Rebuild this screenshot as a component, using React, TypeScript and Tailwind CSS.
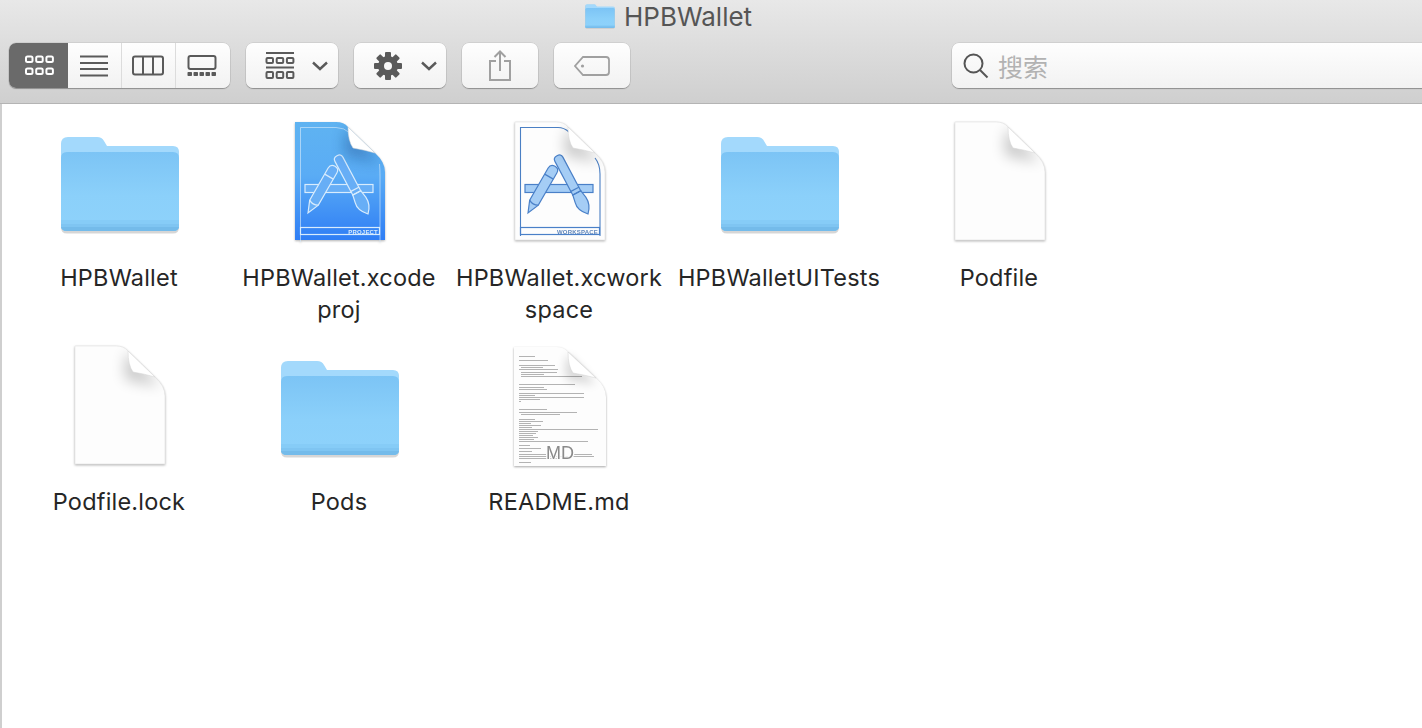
const ink = "#5a5a5a";

function FolderIcon({ className }: { className: string }) {
  return (
    <svg viewBox="0 0 120 124" className={className}>
      <defs>
        <linearGradient id="folderFront" x1="0" y1="0" x2="0" y2="1">
          <stop offset="0" stopColor="#7cc4f5" />
          <stop offset="0.55" stopColor="#8bd0fa" />
          <stop offset="1" stopColor="#8ed2fb" />
        </linearGradient>
      </defs>
      <path d="M1 111 V24 Q1 17 8 17 H37 Q42 17 44 21 L47 26 H113 Q119 26 119 32 V106 Q119 112 113 112 H7 Q1 112 1 106 Z" fill="#000" opacity="0.16" transform="translate(0 1.5)" />
      <path d="M1 40 V24 Q1 17 8 17 H37 Q42 17 44 21 L47 26 H113 Q119 26 119 32 V40 Z" fill="#a3d9fc" />
      <path d="M1 38 Q1 32 7 32 H113 Q119 32 119 38 V105 Q119 111 113 111 H7 Q1 111 1 105 Z" fill="url(#folderFront)" />
      <path d="M1 100 H119 V105 Q119 111 113 111 H7 Q1 111 1 105 Z" fill="#86ccf7" />
      <path d="M1 104 H119 V105 Q119 111 113 111 H7 Q1 111 1 105 Z" fill="#7fc5f2" />
      <path d="M1 107 H119 Q118 111 113 111 H7 Q2 111 1 107 Z" fill="#74bbea" />
    </svg>
  );
}

const docBody = "M15 2 H56 Q64 2 68 7 L95 33 Q105 42 105 52 V120 H15 Z";

function DocFold({ shade, strength }: { shade: string; strength: number }) {
  return (
    <>
      <defs>
        <filter id="foldBlur" x="-80%" y="-80%" width="260%" height="260%">
          <feGaussianBlur stdDeviation="7" />
        </filter>
        <clipPath id="docClip">
          <path d={docBody} />
        </clipPath>
      </defs>
      <g clipPath="url(#docClip)">
        <path d="M68 7 Q62 24 66 36 Q84 40 100 42 Z" fill={shade} opacity={strength} filter="url(#foldBlur)" />
      </g>
      <path d="M68 7 Q68 21 73 28 Q85 30 95 33 Z" fill="#fff" stroke="#d4d4d4" strokeWidth="0.5" />
    </>
  );
}

function XcodeMark({ line, fill, label, labelColor }: { line: string; fill: string; label: string; labelColor: string }) {
  return (
    <g stroke={line} strokeWidth="1.2" fill={fill}>
      <rect x="25" y="64.5" width="68" height="8" />
      <g transform="translate(28 93) rotate(30)">
        <path d="M0 0 L-5 -12 V-49 Q-5 -54 0 -54 Q5 -54 5 -49 V-12 Z" />
        <path d="M-5 -12 Q0 -9 5 -12 M-5 -42 H5" fill="none" />
      </g>
      <g transform="translate(88 94) rotate(-28)">
        <path d="M0 0 Q-8 -8 -6 -16 L-4.5 -24 H4.5 L6 -16 Q7 -7 0 0 Z" />
        <path d="M-4.5 -24 V-62 Q-4.5 -66 0 -66 Q4.5 -66 4.5 -62 V-24 Z" />
        <path d="M-5 -24 H5 M-5 -28 H5" fill="none" />
      </g>
      <rect x="20.5" y="107.5" width="79" height="7" fill="none" />
      <text x="98" y="113.5" textAnchor="end" stroke="none" fill={labelColor} fontSize="6" fontWeight="700" fontFamily="'Liberation Sans', sans-serif" letterSpacing="0.2">
        {label}
      </text>
    </g>
  );
}

function ProjectIcon() {
  return (
    <svg viewBox="0 0 120 124" className="h-[124px] w-[120px] drop-shadow-[0_1px_1px_rgba(0,0,0,0.3)]">
      <defs>
        <linearGradient id="projectBlue" x1="0" y1="0" x2="0" y2="1">
          <stop offset="0" stopColor="#5fb3f1" />
          <stop offset="0.45" stopColor="#5aacf5" />
          <stop offset="1" stopColor="#2f7ef5" />
        </linearGradient>
      </defs>
      <path d={docBody} fill="url(#projectBlue)" />
      <path d="M20.5 122 V7.5 H56 Q64 7.5 70 13 M99.5 44 Q100 50 100 56 V122" fill="none" stroke="#d5e9fb" strokeWidth="0.8" opacity="0.8" />
      <XcodeMark line="#d8ecfd" fill="#67aef6" label="PROJECT" labelColor="#d8ecfd" />
      <DocFold shade="#0b3a7a" strength={0.35} />
    </svg>
  );
}

function WorkspaceIcon() {
  return (
    <svg viewBox="0 0 120 124" className="h-[124px] w-[120px] drop-shadow-[0_1px_1px_rgba(0,0,0,0.3)]">
      <path d={docBody} fill="#fdfdfd" stroke="#e2e2e2" strokeWidth="0.6" />
      <path d="M20.5 116 V7.5 H58 Q64 7.5 69 12 M95 38 Q100 44 100 54 V116" fill="none" stroke="#4a7fc4" strokeWidth="1.1" />
      <XcodeMark line="#4a80c8" fill="#a5cdf5" label="WORKSPACE" labelColor="#5f86bb" />
      <DocFold shade="#000" strength={0.2} />
    </svg>
  );
}

function BlankIcon() {
  return (
    <svg viewBox="0 0 120 124" className="h-[124px] w-[120px] drop-shadow-[0_1px_1px_rgba(0,0,0,0.3)]">
      <path d={docBody} fill="#fdfdfd" stroke="#e2e2e2" strokeWidth="0.6" />
      <DocFold shade="#000" strength={0.2} />
    </svg>
  );
}

// [y, x1, x2] of the tiny text lines in the readme preview
const readmeLines = [
  [12, 19, 35], [16, 19, 48], [21, 19, 55], [23, 21, 43], [25, 19, 58], [28, 21, 57], [30, 21, 44], [32, 21, 82],
  [40, 19, 75], [43, 19, 44], [45, 19, 47], [49, 19, 84], [51, 19, 35], [53, 19, 84], [55, 19, 40], [57, 19, 21],
  [65, 19, 47], [68, 19, 77], [70, 21, 60], [75, 19, 35], [77, 19, 43], [79, 19, 31], [81, 19, 41], [83, 19, 32],
  [85, 19, 98], [87, 19, 38], [89, 19, 36], [91, 19, 33], [93, 19, 38], [95, 19, 34], [97, 19, 88], [101, 19, 30],
  [104, 19, 41], [107, 19, 32], [110, 19, 46], [110, 72, 92], [112, 19, 94], [114, 19, 58], [118, 19, 31],
];

function ReadmeIcon() {
  return (
    <svg viewBox="0 0 120 126" className="h-[126px] w-[120px] drop-shadow-[0_1px_1px_rgba(0,0,0,0.35)]">
      <defs>
        <filter id="readmeSoft">
          <feGaussianBlur stdDeviation="0.3" />
        </filter>
        <filter id="readmeFold" x="-80%" y="-80%" width="260%" height="260%">
          <feGaussianBlur stdDeviation="5" />
        </filter>
      </defs>
      <path d="M14 3 H56 Q64 3 68 8 L96 34 Q106 43 106 53 V122 H14 Z" fill="#fdfdfd" />
      <g filter="url(#readmeSoft)">
        {readmeLines.map(([y, a, b], i) => (
          <rect key={i} x={a} y={y} width={b - a} height="0.8" fill="#a0a0a0" />
        ))}
      </g>
      <path d="M68 10 Q63 24 67 36 Q84 40 96 40 Z" fill="#000" opacity="0.14" filter="url(#readmeFold)" />
      <path d="M68 8 Q68 22 73 29 Q85 31 96 34 Z" fill="#fff" stroke="#d0d0d0" strokeWidth="0.5" />
      <text x="60" y="115" textAnchor="middle" fontSize="18" fill="#8a8a8a" stroke="#fdfdfd" strokeWidth="2.5" paintOrder="stroke" fontFamily="'Liberation Sans', sans-serif">
        MD
      </text>
    </svg>
  );
}

function GridViewIcon() {
  const cells = [0, 1, 2];
  return (
    <svg width="30" height="24" viewBox="0 0 30 24" fill="none" stroke="#fff" strokeWidth="2">
      {cells.map((c) => (
        <rect key={c} x={2 + c * 10.2} y="2.5" width="6.5" height="5.5" rx="1.5" />
      ))}
      {cells.map((c) => (
        <rect key={c} x={2 + c * 10.2} y="14.5" width="6.5" height="5.5" rx="1.5" />
      ))}
    </svg>
  );
}

function ListViewIcon() {
  return (
    <svg width="30" height="24" viewBox="0 0 30 24" stroke={ink} strokeWidth="2">
      <path d="M1 2.5 H29 M1 9 H29 M1 15 H29 M1 21.5 H29" />
    </svg>
  );
}

function ColumnViewIcon() {
  return (
    <svg width="32" height="22" viewBox="0 0 32 22" fill="none" stroke={ink} strokeWidth="2">
      <rect x="1" y="1.5" width="30" height="18" rx="2" />
      <path d="M11 1.5 V19.5 M21 1.5 V19.5" />
    </svg>
  );
}

function GalleryViewIcon() {
  return (
    <svg width="30" height="22" viewBox="0 0 30 22" fill={ink}>
      <rect x="1.5" y="1" width="27" height="13" rx="2" fill="none" stroke={ink} strokeWidth="2" />
      {[0, 1, 2, 3, 4].map((c) => (
        <rect key={c} x={0.5 + c * 6} y="17" width="4.5" height="4" rx="0.8" />
      ))}
    </svg>
  );
}

function ArrangeIcon() {
  const cells = [0, 1, 2];
  return (
    <svg width="30" height="28" viewBox="0 0 30 28" fill="none" stroke={ink} strokeWidth="2">
      <path d="M1 1 H29 M1 15.5 H29" />
      {cells.map((c) => (
        <rect key={c} x={1.5 + c * 10.2} y="6" width="6.5" height="5" rx="1" />
      ))}
      {cells.map((c) => (
        <rect key={c} x={1.5 + c * 10.2} y="20" width="6.5" height="6" rx="1" />
      ))}
    </svg>
  );
}

function GearIcon() {
  const teeth = [0, 45, 90, 135];
  return (
    <svg width="28" height="28" viewBox="0 0 28 28" fill={ink}>
      {teeth.map((t) => (
        <rect key={t} x="11" y="0" width="6" height="28" rx="1" transform={`rotate(${t} 14 14)`} />
      ))}
      <circle cx="14" cy="14" r="10" />
      <circle cx="14" cy="14" r="4" fill="#f8f8f8" />
    </svg>
  );
}

function Chevron() {
  return (
    <svg width="16" height="10" viewBox="0 0 16 10" fill="none" stroke={ink} strokeWidth="2.4">
      <path d="M1 1.5 L8 8 L15 1.5" />
    </svg>
  );
}

function ShareIcon() {
  return (
    <svg width="24" height="32" viewBox="0 0 24 32" fill="none" stroke="#a0a0a0" strokeWidth="2">
      <path d="M8 11 H2 V30 H22 V11 H16 M12 21 V2 M6.5 7 L12 1.5 L17.5 7" />
    </svg>
  );
}

function TagIcon() {
  return (
    <svg width="36" height="20" viewBox="0 0 36 20" fill="none" stroke="#a0a0a0" strokeWidth="1.8">
      <path d="M9 1 H32 Q35 1 35 4 V16 Q35 19 32 19 H9 L1 10 Z" />
      <circle cx="8.5" cy="10" r="1.6" fill="#a0a0a0" stroke="none" />
    </svg>
  );
}

function SearchIcon() {
  return (
    <svg width="26" height="26" viewBox="0 0 26 26" fill="none" stroke="#555" strokeWidth="2">
      <circle cx="10.5" cy="10.5" r="9" />
      <path d="M17 17 L24.5 24.5" />
    </svg>
  );
}

const buttonSurface =
  "flex h-[45px] shrink-0 items-center rounded-[7px] bg-linear-to-b from-[#fefefe] to-[#f2f2f2] shadow-[0_0_0_0.5px_rgba(0,0,0,0.12),0_1px_1px_rgba(0,0,0,0.28)]";

const items = [
  { icon: <FolderIcon className="h-[124px] w-[120px]" />, lines: ["HPBWallet"] },
  { icon: <ProjectIcon />, lines: ["HPBWallet.xcode", "proj"] },
  { icon: <WorkspaceIcon />, lines: ["HPBWallet.xcwork", "space"] },
  { icon: <FolderIcon className="h-[124px] w-[120px]" />, lines: ["HPBWalletUITests"] },
  { icon: <BlankIcon />, lines: ["Podfile"] },
  { icon: <BlankIcon />, lines: ["Podfile.lock"] },
  { icon: <FolderIcon className="h-[124px] w-[120px]" />, lines: ["Pods"] },
  { icon: <ReadmeIcon />, lines: ["README.md"] },
];

export default function App() {
  return (
    <div className="flex h-screen w-full flex-col overflow-hidden bg-white font-['Inter','Liberation_Sans',sans-serif]">
      <header className="h-[104px] shrink-0 border-b border-[#b4b4b4] bg-linear-to-b from-[#e8e8e8] to-[#cfcfcf]">
        <div className="flex h-[43px] items-start pl-[585px]">
          <FolderIcon className="h-[31px] w-[30px]" />
          <span className="ml-[9px] mt-[2px] text-[26px] leading-[30px] text-[#555]">HPBWallet</span>
        </div>
        <div className="flex items-center gap-4 pl-[9px]">
          <div className={`${buttonSurface} w-[221px] overflow-hidden`}>
            <div className="flex h-full w-[59px] items-center justify-center bg-[#6a6a6a]">
              <GridViewIcon />
            </div>
            <div className="flex h-full w-[54px] items-center justify-center border-r border-[#dcdcdc] pr-[2px]">
              <ListViewIcon />
            </div>
            <div className="flex h-full w-[54px] items-center justify-center border-r border-[#dcdcdc] pr-[2px]">
              <ColumnViewIcon />
            </div>
            <div className="flex h-full w-[54px] items-center justify-center pr-[2px]">
              <GalleryViewIcon />
            </div>
          </div>
          <div className={`${buttonSurface} w-[92px] gap-[17px] pl-[19px]`}>
            <ArrangeIcon />
            <Chevron />
          </div>
          <div className={`${buttonSurface} w-[92px] gap-[19px] pl-[20px]`}>
            <GearIcon />
            <Chevron />
          </div>
          <div className={`${buttonSurface} w-[76px] justify-center`}>
            <ShareIcon />
          </div>
          <div className={`${buttonSurface} w-[76px] justify-center`}>
            <TagIcon />
          </div>
          <div className={`${buttonSurface} ml-[306px] w-[500px] gap-[9px] pl-[11px]`}>
            <SearchIcon />
            <span className="pt-[2px] font-['Noto_Sans_CJK_SC',sans-serif] text-[25px] leading-none text-[#b2b2b2]">搜索</span>
          </div>
        </div>
      </header>
      <main className="grid flex-1 auto-rows-[224px] grid-cols-[repeat(5,220px)] content-start border-l-2 border-[#cfcfcf] pl-2 pt-4">
        {items.map((item) => (
          <div key={item.lines[0]} className="flex flex-col items-center">
            <div className="flex h-[124px] items-start">{item.icon}</div>
            <div className="mt-[18px] pr-[2px] text-center text-[23.5px] leading-[32px] tracking-[0.2px] text-[#262626]">
              {item.lines.map((line) => (
                <div key={line}>{line}</div>
              ))}
            </div>
          </div>
        ))}
      </main>
    </div>
  );
}
